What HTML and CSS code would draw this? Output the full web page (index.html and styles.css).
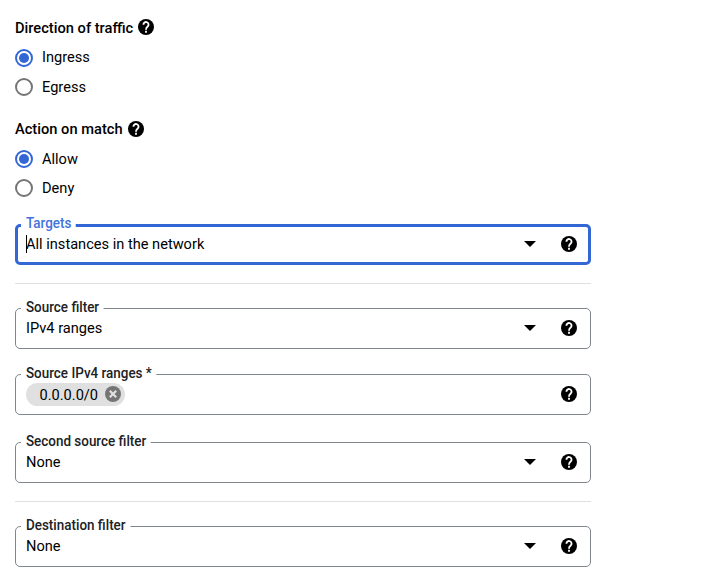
FILE: index.html
```html
<!DOCTYPE html>
<html lang="en">
<head>
<meta charset="utf-8">
<title>Firewall rule</title>
<link rel="stylesheet" href="styles.css">
</head>
<body>
<svg class="defs" width="0" height="0" aria-hidden="true">
  <symbol id="help" viewBox="2 2 20 20"><circle cx="12" cy="12" r="10"/><path class="mark" d="M8.800 9.200a3.200 3.200 0 1 1 5.300 2.200C12.800 12.400 12 13 12 15.300M12 16.800v2.300"/></symbol>
  <symbol id="cancel" viewBox="2 2 20 20"><circle cx="12" cy="12" r="10"/><path class="cross" d="M8 8l8 8M16 8l-8 8"/></symbol>
</svg>
<form class="form">
  <section class="group">
    <h2 class="heading"><span class="title">Direction of traffic</span><svg class="help"><use href="#help"/></svg></h2>
    <label class="option"><span class="radio radio-on"></span><span class="raised">Ingress</span></label>
    <label class="option"><span class="radio"></span>Egress</label>
  </section>
  <section class="group group-action">
    <h2 class="heading"><span>Action on match</span><svg class="help"><use href="#help"/></svg></h2>
    <label class="option"><span class="radio radio-on"></span>Allow</label>
    <label class="option"><span class="radio"></span>Deny</label>
  </section>

  <div class="field field-focus">
    <span class="label">Targets</span>
    <span class="value"><i class="caret"></i>All instances in the network</span>
    <span class="arrow"></span><svg class="help"><use href="#help"/></svg>
  </div>
  <hr class="rule">
  <div class="field">
    <span class="label">Source filter</span>
    <span class="value">IPv4 ranges</span>
    <span class="arrow"></span><svg class="help"><use href="#help"/></svg>
  </div>
  <div class="field field-ranges">
    <span class="label">Source IPv4 ranges *</span>
    <span class="value"><span class="chip">0.0.0.0/0<svg class="cancel"><use href="#cancel"/></svg></span></span>
    <svg class="help"><use href="#help"/></svg>
  </div>
  <div class="field field-second">
    <span class="label">Second source filter</span>
    <span class="value">None</span>
    <span class="arrow"></span><svg class="help"><use href="#help"/></svg>
  </div>
  <hr class="rule">
  <div class="field">
    <span class="label">Destination filter</span>
    <span class="value">None</span>
    <span class="arrow"></span><svg class="help"><use href="#help"/></svg>
  </div>
</form>
</body>
</html>
```
FILE: styles.css
```css
* { box-sizing: border-box; }
body {
  margin: 0;
  background: #fff;
  color: #000;
  font: 400 14.6px/20px Roboto, sans-serif;
}
.defs { position: absolute; }
.form { width: 576px; margin: 17px 0 0 15px; }
.heading {
  display: flex;
  align-items: center;
  gap: 5px;
  height: 20px;
  margin: 0 0 6px;
  font-size: 14.67px;
  font-weight: 500;
}
.title { padding-top: 1px; }
.help { width: 16px; height: 16px; flex: none; }
.mark { fill: none; stroke: #fff; stroke-width: 2.3; }
.cross { fill: none; stroke: #e0e0e0; stroke-width: 2.8; }
.option { display: flex; align-items: center; gap: 9px; height: 30px; }
.option + .option { height: 28px; }
.raised { padding-bottom: 2px; }
.group { height: 102px; }
.group-action { height: 105px; }
.group-action .heading { margin-bottom: 5px; }
.radio {
  display: flex;
  align-items: center;
  justify-content: center;
  width: 18px;
  height: 18px;
  border: 2px solid #757575;
  border-radius: 50%;
}
.radio-on { border-color: #3367d6; }
.radio-on::after {
  content: "";
  width: 10px;
  height: 10px;
  border-radius: 50%;
  background: #3367d6;
}
.field {
  position: relative;
  display: flex;
  align-items: center;
  height: 41px;
  padding: 0 13px 0 10px;
  border: 1px solid #80868b;
  border-radius: 5px;
}
.field .help { margin-bottom: 1px; }
.field-focus { padding: 0 11px 0 8px; border: 3px solid #3367d6; }
.label {
  position: absolute;
  left: 5px;
  top: -12px;
  padding: 0 4.8px 0 5.2px;
  background: #fff;
  color: #202124;
  font-size: 14px;
  font-weight: 500;
  transform: scale(.96, 1);
  transform-origin: 0 50%;
}
.field-focus .label { left: 3px; top: -14px; color: #4272db; }
.value { flex: 1; position: relative; padding-bottom: 1px; }
.caret {
  position: absolute;
  left: 0;
  top: 1px;
  width: 1px;
  height: 18px;
  background: #000;
}
.arrow {
  width: 12px;
  height: 6px;
  margin: 0 25px 1px 0;
  background: #000;
  clip-path: polygon(0 0, 100% 0, 50% 100%);
}
.rule { height: 1px; margin: 18px 0 24px; border: 0; background: #e0e0e0; }
.field-ranges { margin-top: 25px; }
.field-second { margin-top: 27px; }
.field-ranges .value { display: flex; padding: 0; }
.chip {
  display: flex;
  align-items: center;
  gap: 7px;
  height: 23px;
  padding: 0 4px 0 13.5px;
  border-radius: 12px;
  background: #e0e0e0;
}
.chip .cancel { width: 16px; height: 16px; margin-bottom: 1px; fill: #757575; }
```
